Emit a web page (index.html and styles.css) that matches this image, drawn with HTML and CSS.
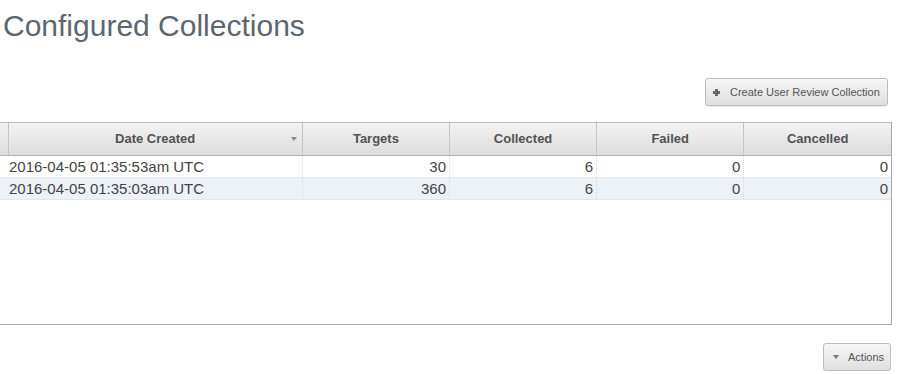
FILE: index.html
```html
<!DOCTYPE html>
<html lang="en">
<head>
    <meta charset="UTF-8">
    <title>Configured Collections</title>
    <link rel="stylesheet" href="styles.css">
</head>
<body>

    <h1 class="title">Configured Collections</h1>

    <div class="toolbar">
        <button class="btn btn-create" type="button">
            <span class="icon-plus"></span>
            Create User Review Collection
        </button>
    </div>

    <!-- Grid de coleções -->
    <div class="grid">
        <table class="grid-table">
            <colgroup>
                <col class="col-stub">
                <col class="col-date">
                <col class="col-num">
                <col class="col-num">
                <col class="col-num">
                <col class="col-num">
            </colgroup>
            <thead>
                <tr>
                    <th class="stub"></th>
                    <th class="sorted">Date Created <span class="sort-arrow"></span></th>
                    <th>Targets</th>
                    <th>Collected</th>
                    <th>Failed</th>
                    <th>Cancelled</th>
                </tr>
            </thead>
            <tbody>
                <tr>
                    <td class="stub"></td>
                    <td class="date">2016-04-05 01:35:53am UTC</td>
                    <td>30</td>
                    <td>6</td>
                    <td>0</td>
                    <td>0</td>
                </tr>
                <tr class="alt">
                    <td class="stub"></td>
                    <td class="date">2016-04-05 01:35:03am UTC</td>
                    <td>360</td>
                    <td>6</td>
                    <td>0</td>
                    <td>0</td>
                </tr>
            </tbody>
        </table>
    </div>

    <div class="footer-bar">
        <button class="btn btn-actions" type="button">
            <span class="icon-caret"></span>
            Actions
        </button>
    </div>

</body>
</html>
```

FILE: styles.css
```css
* {
    margin: 0;
    padding: 0;
    box-sizing: border-box;
}

body {
    font-family: 'Liberation Sans', Arial, sans-serif;
    background-color: #ffffff;
    width: 900px;
}

.title {
    font-size: 30px;
    font-weight: normal;
    line-height: 34px;
    color: #5c6670;
    padding: 9px 0 0 3px;
}

.toolbar {
    display: flex;
    justify-content: flex-end;
    margin-top: 35px;
    padding-right: 12px;
}

.btn {
    display: flex;
    align-items: center;
    height: 28px;
    border: 1px solid #bcbcbc;
    border-radius: 3px;
    background: linear-gradient(#f7f7f7, #dfdfdf);
    box-shadow: 0 1px 1px rgba(0, 0, 0, 0.08);
    font-family: 'Liberation Sans', Arial, sans-serif;
    font-size: 11px;
    color: #555;
    cursor: pointer;
}

.btn-create {
    width: 183px;
    padding: 0 7px;
    gap: 10px;
}

/* icone de mais */
.icon-plus {
    position: relative;
    width: 7px;
    height: 7px;
}

.icon-plus::before,
.icon-plus::after {
    content: "";
    position: absolute;
    background-color: #6a6a6a;
}

.icon-plus::before {
    left: 0;
    top: 2px;
    width: 7px;
    height: 3px;
}

.icon-plus::after {
    left: 2px;
    top: 0;
    width: 3px;
    height: 7px;
}

.grid {
    width: 892px;
    height: 203px;
    margin-top: 16px;
    border-top: 1px solid #b9b9b9;
    border-right: 1px solid #a9a9a9;
    border-bottom: 1px solid #a9a9a9;
}

.grid-table {
    width: 891px;
    table-layout: fixed;
    border-collapse: collapse;
}

.col-stub { width: 8px; }
.col-date { width: 294px; }
.col-num { width: 147px; }

.grid-table th {
    position: relative;
    height: 32px;
    background: linear-gradient(#f3f3f3, #dcdcdc);
    border-right: 1px solid #c4c4c4;
    border-bottom: 1px solid #b4b4b4;
    font-size: 13px;
    font-weight: bold;
    color: #525252;
    text-align: center;
}

.grid-table th:last-child {
    border-right: none;
}

.grid-table th:nth-child(3) {
    width: 148px;
}

.sort-arrow {
    position: absolute;
    right: 5px;
    top: 14px;
    border-left: 3px solid transparent;
    border-right: 3px solid transparent;
    border-top: 4px solid #8a8a8a;
}

.grid-table td {
    height: 22px;
    padding: 1px 3px 0 0;
    border-right: 1px dotted #dadada;
    border-bottom: 1px solid #e6e6e6;
    font-size: 15px;
    color: #444;
    text-align: right;
    white-space: nowrap;
}

.grid-table td:last-child {
    border-right: none;
}

.grid-table td.stub {
    padding: 0;
    border-right: none;
}

.grid-table td.date {
    text-align: left;
    padding-left: 1px;
}

.grid-table tr.alt td {
    background-color: #edf2f8;
}

.footer-bar {
    display: flex;
    justify-content: flex-end;
    margin-top: 18px;
    padding-right: 9px;
}

.btn-actions {
    width: 68px;
    padding: 0 6px 0 9px;
    gap: 9px;
}

.icon-caret {
    border-left: 3px solid transparent;
    border-right: 3px solid transparent;
    border-top: 4px solid #777;
}
```
